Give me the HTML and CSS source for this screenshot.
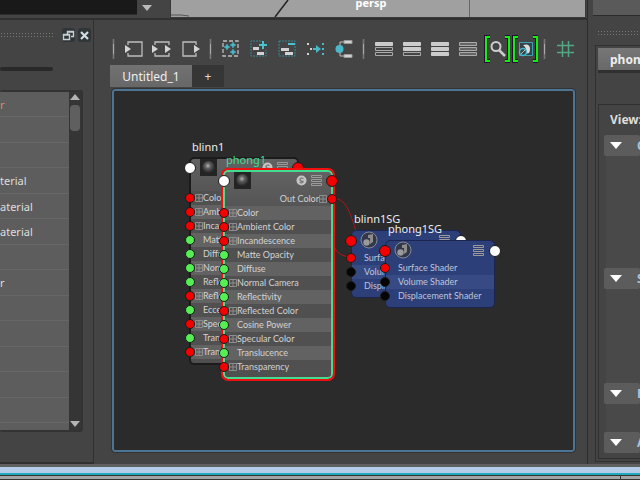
FILE: index.html
```
<!DOCTYPE html>
<html lang="en">
  <head>
    <meta charset="utf-8">
    <title>Node Editor</title>
    <link rel="stylesheet" href="styles.css">
  </head>
  <body>
    <!-- shared symbols -->
    <svg class="defs" aria-hidden="true">
      <defs>
        <radialGradient id="ball" cx="45%" cy="40%" r="60%">
          <stop offset="0" stop-color="#b5b5b5"/><stop offset="0.4" stop-color="#5c5c5c"/><stop offset="1" stop-color="#262626"/>
        </radialGradient>
        <symbol id="thumb" viewBox="0 0 17 17"><rect width="17" height="17" fill="#242424"/><circle cx="8.500" cy="8" r="6" fill="url(#ball)"/></symbol>
        <symbol id="solo" viewBox="0 0 11 11"><circle cx="5.500" cy="5.500" r="5" fill="#c4c4c4"/><path d="M7.500 3.500Q4 2.500 4 4.500T7 6.500Q7 8.500 3.500 7.500" fill="none" stroke="#777" stroke-width="1.300"/></symbol>
        <symbol id="rows" viewBox="0 0 11 11"><path d="M.5 .5h10v2h-10zM.5 4.500h10v2h-10zM.5 8.500h10v2h-10z" fill="none" stroke="#9b9b9b"/></symbol>
        <symbol id="sg" viewBox="0 0 18 18"><circle cx="9" cy="9" r="8" fill="#32374a" stroke="#858a98"/><circle cx="6.500" cy="11.500" r="3.200" fill="#9a9a9a"/><path d="M8 4l5-1v8l-3 2V7H8z" fill="#8c8c8c"/></symbol>
        <symbol id="plus" viewBox="0 0 8 8"><path d="M.5 .5h7v7h-7zM0 4h8M4 0v8" fill="none" stroke="#8d8d8d"/></symbol>
      </defs>
    </svg>
    <div class="app">
      <div class="workspace">
        <div class="work">
          <div class="top">
            <select class="picker" aria-label="Panel filter"><option></option></select>
            <svg class="picker-arrow" viewBox="0 0 10 6"><path d="M0 0h10L5 6z" fill="#bababa"/></svg>
            <div class="viewport">
              <svg viewBox="0 0 414 17" preserveAspectRatio="none"><path d="M117 0L104 17" stroke="#222" stroke-width="1.500"/><path d="M298.500 0v17" fill="none" stroke="#666"/><path d="M0 15h10l8 1" fill="none" stroke="#555"/></svg>
              <span class="camera">persp</span>
            </div>
          </div>
          <div class="panels">
            <aside class="library">
              <div class="library-head">
                <span class="grip"></span>
                <button class="mini" aria-label="Float"><svg viewBox="0 0 13 13"><path d="M5.500 5V2.500h6v5H9M5.500 3h6M1.500 5.500h6v5h-6zM1.500 6h6" fill="none" stroke="#c4d0d4" stroke-width="1.400"/></svg></button>
                <button class="mini" aria-label="Close"><svg viewBox="0 0 13 13"><path d="M3 3l7 7M10 3l-7 7" stroke="#d0dde4" stroke-width="2.200"/></svg></button>
              </div>
              <div class="track"></div>
              <div class="list-box">
                <ul class="list">
                  <li class="hot">r</li><li></li><li></li>
                  <li>terial</li><li>aterial</li><li>aterial</li>
                  <li></li><li>r</li><li></li><li></li><li></li><li></li><li></li><li></li>
                </ul>
                <div class="scroll">
                  <svg viewBox="0 0 10 6"><path d="M0 6h10L5 0z" fill="#b4b4b4"/></svg>
                  <div class="thumb"></div>
                  <svg viewBox="0 0 10 6"><path d="M0 0h10L5 6z" fill="#b4b4b4"/></svg>
                </div>
              </div>
            </aside>
            <main class="editor">
              <div class="toolbar">
                <span class="sep"></span>
                <button aria-label="Input connections"><svg viewBox="0 0 28 28"><path d="M8 10V7h14v14H8v-3" fill="none" stroke="#bdbdbd" stroke-width="1.300"/><path d="M5 10l6 4-6 4z" fill="#d4d4d4"/></svg></button>
                <button aria-label="Input and output connections"><svg viewBox="0 0 28 28"><path d="M7 10V7h14v3M21 18v3H7v-3" fill="none" stroke="#bdbdbd" stroke-width="1.300"/><path d="M4 10l6 4-6 4zM17 10l6 4-6 4z" fill="#d4d4d4"/></svg></button>
                <button aria-label="Output connections"><svg viewBox="0 0 28 28"><path d="M20 10V7H7v14h13v-3" fill="none" stroke="#bdbdbd" stroke-width="1.300"/><path d="M18 10l6 4-6 4z" fill="#d4d4d4"/></svg></button>
                <span class="sep"></span>
                <button aria-label="Clear graph"><svg viewBox="0 0 28 28"><path d="M6 6h15v15H6z" fill="none" stroke="#bdbdbd" stroke-width="1.300" stroke-dasharray="4 2"/><path d="M10 9l1 2 2 1-2 1-1 2-1-2-2-1 2-1zM16 7l1 2 2 1-2 1-1 2-1-2-2-1 2-1zM16 14l1 2 2 1-2 1-1 2-1-2-2-1 2-1z" fill="#49b8c8" stroke="#49b8c8" stroke-width=".5"/></svg></button>
                <button aria-label="Add nodes"><svg viewBox="0 0 28 28"><path d="M16 6H6v15h15v-6" fill="none" stroke="#348997" stroke-dasharray="2 1"/><path d="M18 6v8M14 10h8" stroke="#49c1cf" stroke-width="2"/><path d="M8 12h6v3H8zM12 17h7v3h-7z" fill="#d2d2d2"/></svg></button>
                <button aria-label="Remove nodes"><svg viewBox="0 0 28 28"><path d="M6 6h16v15H6z" fill="none" stroke="#348997" stroke-dasharray="2 1"/><path d="M15 9h7" stroke="#49c1cf" stroke-width="2"/><path d="M8 13h8v3H8zM12 17h8v3h-8z" fill="#d2d2d2"/></svg></button>
                <button aria-label="Rearrange"><svg viewBox="0 0 28 28"><path d="M6 8h2v2H6zM9 13h2v2H9zM6 18h2v2H6z" fill="#d2d2d2"/><path d="M12 13h3v-3l5 4-5 4v-3h-3zM21 8h2v2h-2zM21 13h2v2h-2zM21 18h2v2h-2z" fill="#49b8c8"/></svg></button>
                <button aria-label="Graph materials"><svg viewBox="0 0 28 28"><path d="M11 11V7h4M11 17v4h4" fill="none" stroke="#bdbdbd"/><circle cx="10.500" cy="14" r="4" fill="#49b8c8"/><path d="M15 5.500h8v3h-8zM15 19.500h8v3h-8z" fill="#d2d2d2" stroke="#999"/></svg></button>
                <span class="sep"></span>
                <button aria-label="Simple mode"><svg viewBox="0 0 28 28"><path d="M5.500 7.500h17v3h-17z" fill="#ccc" stroke="#ccc"/><path d="M5.500 12.500h17v3h-17zM5.500 17.500h17v3h-17z" fill="none" stroke="#aaa"/></svg></button>
                <button aria-label="Connected mode"><svg viewBox="0 0 28 28"><path d="M5.500 7.500h17v3h-17zM5.500 12.500h17v3h-17z" fill="#ccc" stroke="#ccc"/><path d="M5.500 17.500h17v3h-17z" fill="none" stroke="#aaa"/></svg></button>
                <button aria-label="Full mode"><svg viewBox="0 0 28 28"><path d="M5.500 7.500h17v3h-17zM5.500 12.500h17v3h-17zM5.500 17.500h17v3h-17z" fill="#ccc" stroke="#ccc"/></svg></button>
                <button aria-label="Custom mode"><svg viewBox="0 0 28 28"><path d="M5.500 7.500h17v3h-17zM5.500 12.500h17v3h-17zM5.500 17.500h17v3h-17z" fill="#666" stroke="#aaa"/></svg></button>
                <button aria-label="Search"><svg viewBox="0 0 28 28"><path d="M8 2H4v24h4M23 2h4v24h-4" fill="none" stroke="#26102e" stroke-width="4"/><path d="M8 2H4v24h4M23 2h4v24h-4" fill="none" stroke="#0bf20b" stroke-width="2"/><circle cx="14" cy="11.500" r="4.500" fill="none" stroke="#ccc" stroke-width="2"/><path d="M17 15l6 6" stroke="#ccc" stroke-width="2.500"/></svg></button>
                <button aria-label="Swatch size"><svg viewBox="0 0 28 28"><path d="M8 2H4v24h4M23 2h4v24h-4" fill="none" stroke="#26102e" stroke-width="4"/><path d="M8 2H4v24h4M23 2h4v24h-4" fill="none" stroke="#0bf20b" stroke-width="2"/><path d="M9.500 7.500h13v13h-13z" fill="#35434a" stroke="#3fa0b4"/><path d="M13 10q7-2 7 4t-5 4q3-4-2-8z" fill="#ddd"/><circle cx="13" cy="17" r="3.500" fill="#35434a" stroke="#49b8c8" stroke-width="1.500"/><path d="M11 19l4-4" stroke="#bbb"/></svg></button>
                <span class="sep"></span>
                <button aria-label="Grid"><svg viewBox="0 0 28 28"><path d="M11.500 6v16M17.500 6v16M6 10.500h17M6 17.500h17" stroke="#53a782" stroke-width="1.500"/></svg></button>
              </div>
              <div class="tabs">
                <button class="tab active">Untitled_1</button>
                <button class="tab add">+</button>
              </div>
              <div class="canvas">
                <svg class="wires" width="400" height="300"><path d="M218 107C236 107 237 130 246 150M218 107C226 130 206 164 237 166" fill="none" stroke="#b01616"/></svg>

                <section class="node blinn">
                  <h2>blinn1</h2>
                  <i class="port big white"></i><i class="port big red right"></i>
                  <div class="head"><svg class="swatch"><use href="#thumb"/></svg><svg class="ico"><use href="#solo"/></svg><svg class="ico"><use href="#rows"/></svg></div>
                  <div class="row"><i class="port red"></i><svg><use href="#plus"/></svg>Color</div>
                  <div class="row"><i class="port red"></i><svg><use href="#plus"/></svg>Ambient Color</div>
                  <div class="row"><i class="port red"></i><svg><use href="#plus"/></svg>Incandescence</div>
                  <div class="row plain"><i class="port green"></i>Matte Opacity</div>
                  <div class="row plain"><i class="port green"></i>Diffuse</div>
                  <div class="row"><i class="port green"></i><svg><use href="#plus"/></svg>Normal Camera</div>
                  <div class="row plain"><i class="port green"></i>Reflectivity</div>
                  <div class="row"><i class="port red"></i><svg><use href="#plus"/></svg>Reflected Color</div>
                  <div class="row plain"><i class="port green"></i>Eccentricity</div>
                  <div class="row"><i class="port red"></i><svg><use href="#plus"/></svg>Specular Color</div>
                  <div class="row plain"><i class="port green"></i>Translucence</div>
                  <div class="row"><i class="port red"></i><svg><use href="#plus"/></svg>Transparency</div>
                </section>

                <section class="node phong">
                  <h2>phong1</h2>
                  <i class="port big white"></i><i class="port big red right"></i>
                  <div class="head"><svg class="swatch"><use href="#thumb"/></svg><svg class="ico"><use href="#solo"/></svg><svg class="ico"><use href="#rows"/></svg></div>
                  <div class="row out">Out Color<svg><use href="#plus"/></svg><i class="port red right"></i></div>
                  <div class="row"><i class="port red"></i><svg><use href="#plus"/></svg>Color</div>
                  <div class="row"><i class="port red"></i><svg><use href="#plus"/></svg>Ambient Color</div>
                  <div class="row"><i class="port red"></i><svg><use href="#plus"/></svg>Incandescence</div>
                  <div class="row plain"><i class="port green"></i>Matte Opacity</div>
                  <div class="row plain"><i class="port green"></i>Diffuse</div>
                  <div class="row"><i class="port green"></i><svg><use href="#plus"/></svg>Normal Camera</div>
                  <div class="row plain"><i class="port green"></i>Reflectivity</div>
                  <div class="row"><i class="port red"></i><svg><use href="#plus"/></svg>Reflected Color</div>
                  <div class="row plain"><i class="port green"></i>Cosine Power</div>
                  <div class="row"><i class="port red"></i><svg><use href="#plus"/></svg>Specular Color</div>
                  <div class="row plain"><i class="port green"></i>Translucence</div>
                  <div class="row"><i class="port red"></i><svg><use href="#plus"/></svg>Transparency</div>
                </section>

                <section class="node sg blinn-sg">
                  <h2>blinn1SG</h2>
                  <i class="port big red"></i><i class="port big white right"></i>
                  <div class="head"><svg class="badge"><use href="#sg"/></svg><svg class="ico"><use href="#rows"/></svg></div>
                  <div class="row"><i class="port red"></i>Surface Shader</div>
                  <div class="row"><i class="port black"></i>Volume Shader</div>
                  <div class="row"><i class="port black"></i>Displacement Shader</div>
                </section>

                <section class="node sg phong-sg">
                  <h2>phong1SG</h2>
                  <i class="port big red"></i><i class="port big white right"></i>
                  <div class="head"><svg class="badge"><use href="#sg"/></svg><svg class="ico"><use href="#rows"/></svg></div>
                  <div class="row"><i class="port red"></i>Surface Shader</div>
                  <div class="row"><i class="port black"></i>Volume Shader</div>
                  <div class="row"><i class="port black"></i>Displacement Shader</div>
                </section>
              </div>
            </main>
          </div>
        </div>
        <aside class="attributes">
          <div class="stub"></div>
          <span class="grip"></span>
          <div class="attr-box">
            <button class="attr-tab">phong1</button>
            <div class="attr-body">
              <h3>View:</h3>
              <button class="fold"><svg viewBox="0 0 12 7"><path d="M0 0h12L6 7z" fill="#fff"/></svg>C</button>
              <div class="fold-body common"></div>
              <button class="fold"><svg viewBox="0 0 12 7"><path d="M0 0h12L6 7z" fill="#fff"/></svg>S</button>
              <div class="fold-body specular"></div>
              <button class="fold"><svg viewBox="0 0 12 7"><path d="M0 0h12L6 7z" fill="#fff"/></svg>E</button>
              <div class="fold-body extra"></div>
              <button class="fold"><svg viewBox="0 0 12 7"><path d="M0 0h12L6 7z" fill="#fff"/></svg>A</button>
            </div>
          </div>
        </aside>
      </div>
      <footer class="edge"><div class="glass"></div><div class="under"><span></span><span></span></div></footer>
    </div>
  </body>
</html>
```
FILE: styles.css
```
* { box-sizing: border-box; }
body { margin: 0; background: #444; color: #ddd; font-family: "Noto Sans", "Open Sans", sans-serif; font-size: 12px; overflow: hidden; }
button { border: 0; padding: 0; margin: 0; background: none; color: inherit; font: inherit; }
h2, h3, ul { margin: 0; padding: 0; font-weight: normal; }
svg { display: block; flex: none; }
.defs { position: absolute; width: 0; height: 0; }

.app { display: flex; flex-direction: column; height: 100vh; }
.workspace { display: flex; flex: 1; min-height: 0; }
.work { display: flex; flex-direction: column; flex: 1; min-width: 0; border-right: 1px solid #2c2c2c; }

/* strip above the panels */
.top { display: flex; height: 20px; border-bottom: 2px solid #303030; }
.picker { appearance: none; width: 137px; height: 15px; border: 0; border-bottom: 1px solid #2c2c2c; background: #191919; }
.picker-arrow { width: 10px; height: 6px; margin: 5px 8px 0 5px; }
.viewport { display: flex; justify-content: center; position: relative; flex: 1; height: 17px; margin: 0 2px 0 11px; background: #a0a0a0; outline: 1px solid #393939; }
.viewport svg { position: absolute; width: 100%; height: 100%; }
.camera { position: relative; margin-right: 14px; color: #fff; font-size: 11px; font-weight: bold; line-height: 6px; }

.panels { display: flex; flex: 1; min-height: 0; }
.grip { flex: 1; height: 6px; background: radial-gradient(circle, #777 1px, transparent 1px) 0 0 / 3px 3px; }

/* left library */
.library { display: flex; flex-direction: column; width: 94px; padding-top: 8px; border-right: 1px solid #303030; border-bottom: 2px solid #303030; }
.library-head { display: flex; align-items: center; gap: 3px; height: 14px; padding-right: 2px; }
.library-head .grip { margin-right: 6px; }
.mini { width: 13px; height: 14px; border-radius: 3px; background: #303538; }
.mini svg { width: 13px; height: 13px; }
.track { width: 53px; height: 4px; margin: 25px 0 19px; border-radius: 2px; background: #292929; }
.list-box { display: flex; flex: 1; min-height: 0; width: 83px; margin-bottom: 30px; border: 2px solid #333; border-left: 0; border-radius: 3px; background: #353535; }
.list { flex: 1; overflow: hidden; background: #5d5d5d; font-size: 11px; list-style: none; }
.list li { height: 26px; border-bottom: 1px solid #676767; line-height: 26px; }
.list li:nth-child(odd) { height: 25px; }
.list .hot { color: #d98b62; }
.scroll { display: flex; flex-direction: column; align-items: center; width: 12px; padding: 2px 0 3px; }
.scroll svg { width: 10px; height: 6px; }
.scroll .thumb { width: 10px; height: 26px; margin: 5px 0 auto; border-radius: 4px; background: #5f5f5f; }

/* node editor */
.editor { display: flex; flex-direction: column; flex: 1; min-width: 0; padding: 15px 12px 12px 18px; }
.toolbar { display: flex; align-items: center; height: 28px; margin-left: -5px; }
.toolbar button, .toolbar svg { flex: none; width: 28px; height: 28px; }
.sep { flex: none; width: 3px; height: 20px; margin: 0 5px; background: linear-gradient(#777 25%, #aaa 25%, #aaa 75%, #777 75%); border: solid #555; border-width: 0 1px; }
.tabs { display: flex; height: 24px; margin-left: -2px; padding-top: 2px; }
.tab { width: 32px; height: 22px; background: #363636; }
.tab.active { width: 82px; background: linear-gradient(#727272, #676767); color: #eee; }
.canvas { position: relative; flex: 1; margin-top: 2px; border: 2px solid #4c7595; border-radius: 3px; background: #2b2b2b; overflow: hidden; outline: 1px solid #333; }
.wires { position: absolute; left: 0; top: 0; }

/* nodes sit freely on the canvas */
.node { position: absolute; border: 2px solid #1b1b1b; border-radius: 5px; background: linear-gradient(#626262, #4f4f4f 50px); color: #d2d2d2; font-family: Lato, sans-serif; font-size: 9px; }
.node h2 { position: absolute; left: 1px; top: -20px; color: #eee; font-family: "Noto Sans", sans-serif; font-size: 11px; line-height: 16px; }
.head { display: flex; gap: 4px; height: 32px; padding: 0 9px; }
.swatch { width: 17px; height: 17px; margin-right: auto; }
.badge { width: 18px; height: 18px; margin-right: auto; }
.ico { width: 11px; height: 11px; margin-top: 3px; }
.row { display: flex; align-items: center; position: relative; height: 14px; padding-left: 4px; line-height: 14px; white-space: nowrap; }
.row svg { width: 8px; height: 8px; }
.row.plain { padding-left: 12px; }
.row.out { justify-content: flex-end; padding-right: 4px; }
.row:nth-of-type(odd) { background: #626262; }
.row:nth-of-type(even) { background: #505050; }
.row.out { background: none; }
.port { position: absolute; left: -6px; width: 10px; height: 10px; border: 1px solid #1b1b1b; border-radius: 50%; }
.port.big { left: -7px; top: 3px; width: 12px; height: 12px; }
.port.right { left: auto; right: -6px; }
.port.big.right { left: auto; right: -7px; }
.white { background: #fff; }
.red { background: #f40000; }
.green { background: #55ee55; }
.black { background: #050505; }

.blinn { left: 75px; top: 66px; width: 110px; height: 208px; }
.phong { left: 109px; top: 79px; width: 110px; height: 209px; border-color: #45dc91; outline: 2px solid #f01010; }
.phong h2 { color: #45dc91; }
.phong .head { height: 20px; }
.sg { width: 110px; height: 68px; border: 1px solid #1b2550; background: #2d3f78; color: #bcc5dc; }
.sg h2 { left: 2px; }
.sg .head { height: 20px; padding: 0 10px 0 8px; }
.sg .ico { margin-top: 4px; }
.sg .row { padding-left: 12px; background: none; }
.sg .row:nth-of-type(odd) { background: #384a83; }
.sg .port.big { top: 4px; }
.blinn-sg { left: 237px; top: 139px; }
.phong-sg { left: 271px; top: 149px; }

/* attribute editor */
.attributes { display: flex; flex-direction: column; width: 52px; padding: 0 0 2px 5px; overflow: hidden; }
.stub { height: 16px; background: #5a5a5a; border-bottom: 1px solid #2c2c2c; }
.attributes .grip { flex: none; margin: 14px 0 9px 4px; }
.attr-box { display: flex; flex-direction: column; flex: 1; margin-left: 2px; padding-left: 2px; border: solid #303030; border-width: 1px 0 1px 1px; }
.attr-tab { height: 25px; margin: 2px 0 31px; padding-left: 12px; border-bottom: 3px solid #303030; background: linear-gradient(#777, #686868); color: #eee; font-weight: bold; text-align: left; }
.attr-body { flex: 1; margin-bottom: 2px; padding-left: 5px; border: solid #303030; border-width: 1px 0 1px 1px; }
.attr-body h3 { height: 30px; padding-left: 6px; font-size: 12px; font-weight: bold; line-height: 30px; }
.fold { display: flex; align-items: center; gap: 15px; width: 100%; height: 21px; padding-left: 6px; border-radius: 2px; background: #5c5c5c; color: #a8c4dc; font-weight: bold; }
.fold svg { width: 12px; height: 7px; }
.fold-body { margin-left: 2px; background: #494949; }
.common { height: 112px; }
.specular { height: 94px; }
.extra { height: 28px; }

/* window edge */
.edge { display: flex; flex-direction: column; height: 16px; padding-top: 3px; background: #606060; }
.glass { height: 8px; background: #b5cde8; border-bottom: 2px solid #20a9bd; }
.under { display: flex; gap: 1px; height: 5px; padding: 1px 0; background: #333; }
.under span { width: 19px; background: #a4a4a4; }
.under span:first-child { flex: 1; }
```
